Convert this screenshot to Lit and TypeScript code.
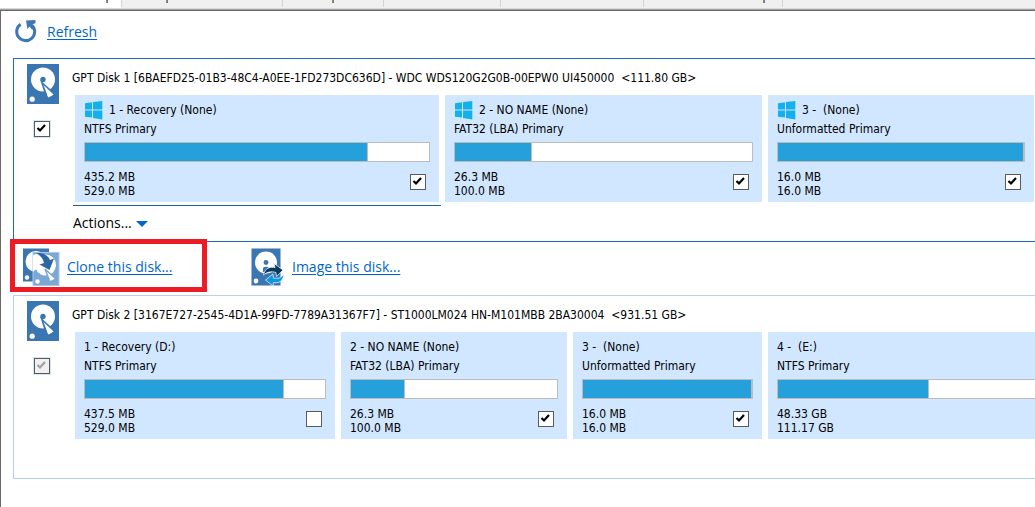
import { LitElement, html, svg, css, nothing } from "lit";
import { customElement, property, state } from "lit/decorators.js";
import { classMap } from "lit/directives/class-map.js";

interface Partition {
  name: string;
  kind: string;
  used: string;
  total: string;
  fill: number;
  weight: number;
  checked?: boolean;
  windows?: boolean;
  open?: boolean;
}

interface Disk {
  id: string;
  title: string;
  locked?: boolean;
  active?: boolean;
  partitions: Partition[];
}

const DISKS: Disk[] = [
  {
    id: "disk1",
    title: "GPT Disk 1 [6BAEFD25-01B3-48C4-A0EE-1FD273DC636D] - WDC WDS120G2G0B-00EPW0 UI450000  <111.80 GB>",
    active: true,
    partitions: [
      { name: "1 - Recovery (None)", kind: "NTFS Primary", used: "435.2 MB", total: "529.0 MB", fill: 82.3, weight: 364, checked: true, windows: true },
      { name: "2 - NO NAME (None)", kind: "FAT32 (LBA) Primary", used: "26.3 MB", total: "100.0 MB", fill: 26, weight: 317, checked: true, windows: true },
      { name: "3 -  (None)", kind: "Unformatted Primary", used: "16.0 MB", total: "16.0 MB", fill: 100, weight: 266, checked: true, windows: true },
    ],
  },
  {
    id: "disk2",
    title: "GPT Disk 2 [3167E727-2545-4D1A-99FD-7789A31367F7] - ST1000LM024 HN-M101MBB 2BA30004  <931.51 GB>",
    locked: true,
    partitions: [
      { name: "1 - Recovery (D:)", kind: "NTFS Primary", used: "437.5 MB", total: "529.0 MB", fill: 83, weight: 260, checked: false },
      { name: "2 - NO NAME (None)", kind: "FAT32 (LBA) Primary", used: "26.3 MB", total: "100.0 MB", fill: 26, weight: 226, checked: true },
      { name: "3 -  (None)", kind: "Unformatted Primary", used: "16.0 MB", total: "16.0 MB", fill: 100, weight: 189, checked: true },
      { name: "4 -  (E:)", kind: "NTFS Primary", used: "48.33 GB", total: "111.17 GB", fill: 58.8, weight: 267, open: true },
    ],
  },
];

const driveIcon = html`<svg width="32" height="40" viewBox="0 0 32 40" aria-hidden="true">
  <rect width="32" height="40" fill="#3a76b1" />
  <circle cx="16" cy="15.5" r="12" fill="#fff" />
  <circle cx="16" cy="15.5" r="2.7" fill="#3a76b1" />
  <path d="M15.5 19.5 L28 31 L20.5 35 Z" fill="#fff" stroke="#3a76b1" stroke-width="2.2" />
  <path d="M16.5 21 L26.5 30.5 L21.5 33.5 Z" fill="#fff" />
  <circle cx="5.2" cy="35.2" r="2.6" fill="#fff" />
</svg>`;

const windowsIcon = html`<svg width="19" height="19" viewBox="0 0 19 19" aria-hidden="true">
  <path fill="#14b0ec" d="M1 2.2 8 1.2V8.500H1zM9 1 18.300 0V8.500H9zM1 9.500h7v7L1 15.800zM9 9.500h9.300v9L9 17z" />
</svg>`;

const refreshIcon = html`<svg width="24" height="26" viewBox="0 0 24 26" aria-hidden="true">
  <path d="M6.600 5.200 A9 9 0 1 0 18 6.200" fill="none" stroke="#3d78b4" stroke-width="3" />
  <path d="M12 1.600 L21.400 1 L21.600 4 L18.500 5.500 L21 8.500 L21 10.500 L18 10.500 L15.500 7.500 L13.400 10 Z" fill="#3d78b4" />
</svg>`;

const cloneIcon = html`<svg width="38" height="38" viewBox="0 0 38 38" aria-hidden="true">
  <rect x="1" y="0.5" width="26" height="33" fill="#3a76b1" />
  <circle cx="14" cy="13.5" r="10.5" fill="#fff" />
  <circle cx="5" cy="29.5" r="2.2" fill="#fff" />
  <rect x="11" y="4.5" width="26" height="33" fill="#7ba7d4" stroke="#a9c6e4" stroke-width="1" />
  <circle cx="23.5" cy="17" r="10.5" fill="#fff" />
  <path d="M11 24V7L17 5L24 12Z" fill="#fff" />
  <path d="M14 5.5 C20 4 26 7 28 12 L32 10.5 L27.5 22 L17.5 16.5 L22 15 C21 10 18 7 14 5.5Z" fill="#2c67a3" />
  <path d="M23 21 L34 31 L28 34 Z" fill="#fff" stroke="#7ba7d4" stroke-width="1.5" />
  <circle cx="15.5" cy="33.5" r="2.2" fill="#fff" />
</svg>`;

const imageIcon = html`<svg width="34" height="38" viewBox="0 0 34 38" aria-hidden="true">
  <rect x="0.5" y="0.5" width="29" height="37" fill="#3a76b1" />
  <circle cx="15" cy="14.5" r="11" fill="#fff" />
  <circle cx="15" cy="14.5" r="2.4" fill="#3a76b1" />
  <path d="M12 20 a4 4 0 0 1 6 0 v4 h-6z" fill="#3a76b1" />
  <circle cx="5" cy="33" r="2.4" fill="#fff" />
  <path d="M12.5 27 C14 20 19 18.5 24 19.5 L23 15.5 L32 22 L25.5 28.5 L25 24.5 C20 23 16 24 12.5 27Z" fill="#0a3a5c" stroke="#fff" stroke-width="0.7" />
  <path d="M33 26 C32 34 27 35.5 22.5 34.5 L22 38 L14.5 32 L22 26 L22.5 30 C27 31 30 30 33 26Z" fill="#0c97e2" stroke="#fff" stroke-width="0.7" />
</svg>`;

const base = css`
  * {
    box-sizing: border-box;
  }
  svg {
    display: block;
    flex: none;
  }
  .check {
    appearance: none;
    flex: none;
    width: 16px;
    height: 16px;
    margin: 0;
    border: 1px solid #5a5a5a;
    background: #fff center / 14px 14px no-repeat;
  }
  .check:checked {
    background-image: url("data:image/svg+xml,%3Csvg xmlns='http://www.w3.org/2000/svg' viewBox='0 0 14 14'%3E%3Cpath d='M2.5 6 5 8.5 10 3' fill='none' stroke='%23000' stroke-width='2.2'/%3E%3C/svg%3E");
  }
  .check:disabled {
    background-color: #f0f0f0;
  }
  .check:disabled:checked {
    background-image: url("data:image/svg+xml,%3Csvg xmlns='http://www.w3.org/2000/svg' viewBox='0 0 14 14'%3E%3Cpath d='M2.5 6 5 8.5 10 3' fill='none' stroke='%23a0a0a0' stroke-width='2.2'/%3E%3C/svg%3E");
  }
`;

@customElement("disk-panel")
export class DiskPanel extends LitElement {
  @property({ attribute: false }) disk!: Disk;

  static styles = [
    base,
    css`
      :host {
        display: block;
        font: 12px/19px "DejaVu Sans Condensed", "Noto Sans", sans-serif;
        color: #000;
      }
      .panel {
        display: flex;
        gap: 13px;
        padding-left: 13px;
        border: 1px solid #b8d2ea;
        border-right: 0;
      }
      .active {
        border-color: #1f6cbb;
      }
      .rail {
        display: flex;
        flex-direction: column;
        gap: 17px;
        width: 32px;
        padding-top: 5px;
      }
      .rail .check {
        outline: 1px solid #d0e7f8;
        margin-left: 7px;
      }
      .body {
        flex: 1;
        min-width: 0;
      }
      .title {
        margin: 0;
        padding-top: 2px;
        font-size: 12px;
        font-weight: 400;
        line-height: 34px;
        white-space: pre;
      }
      .partitions {
        display: grid;
        column-gap: 6px;
        padding: 0 1px 0 3px;
      }
      .open-ended {
        padding-right: 0;
      }
      .partition {
        min-width: 0;
        padding: 6px 9px 4px;
        background: #d1e7ff;
      }
      .open {
        padding-right: 0;
      }
      .line {
        display: flex;
        align-items: center;
        gap: 6px;
        height: 19px;
        white-space: pre;
      }
      .usage {
        appearance: none;
        display: block;
        width: 100%;
        height: 20px;
        margin-top: 3px;
        border: 1px solid #bcbcbc;
        background: #fff;
      }
      .open .usage {
        border-right: 0;
      }
      .usage::-webkit-progress-bar {
        background: #fff;
      }
      .usage::-webkit-progress-value {
        background: #26a0da;
        border-right: 1px solid #bcbcbc;
      }
      .foot {
        display: flex;
        justify-content: space-between;
        margin-top: 8px;
        line-height: 14px;
      }
      .foot .check {
        margin: 4px 4px 0 0;
      }
      .rule {
        grid-column: 1;
        height: 1px;
        margin: 3px -2px 0;
        background: #1a5fa8;
      }
      .tail {
        min-height: 39px;
      }
      .selected .tail {
        min-height: 35px;
      }
      .actions {
        display: flex;
        align-items: center;
        gap: 4px;
        height: 34px;
        padding: 0 0 0 1px;
        border: 0;
        background: none;
        color: #000;
        font: 14px/20px "Open Sans", "Noto Sans", sans-serif;
      }
    `,
  ];

  private partition(p: Partition) {
    return html`<section class=${classMap({ partition: true, open: !!p.open })}>
      <div class="line">${p.windows ? windowsIcon : nothing}<span>${p.name}</span></div>
      <div class="line">${p.kind}</div>
      <progress class="usage" max="100" .value=${p.fill} aria-label="${p.name} usage"></progress>
      <div class="foot">
        <div>
          <div>${p.used}</div>
          <div>${p.total}</div>
        </div>
        ${p.open
          ? nothing
          : html`<input class="check" type="checkbox" .checked=${!!p.checked} aria-label=${p.name} />`}
      </div>
    </section>`;
  }

  render() {
    const d = this.disk;
    const columns = d.partitions.map((p) => `minmax(0, ${p.weight}fr)`).join(" ");
    const openEnded = d.partitions.some((p) => p.open);
    return html`<article class=${classMap({ panel: true, active: !!d.active })}>
      <div class="rail">
        ${driveIcon}
        <input class="check" type="checkbox" checked ?disabled=${!!d.locked} aria-label="Select ${d.title}" />
      </div>
      <div class=${classMap({ body: true, selected: !!d.active })}>
        <h2 class="title">${d.title}</h2>
        <div
          class=${classMap({ partitions: true, "open-ended": openEnded })}
          style="grid-template-columns: ${columns}"
        >
          ${d.partitions.map((p) => this.partition(p))}
          ${d.active ? html`<div class="rule"></div>` : nothing}
        </div>
        <div class="tail">
          ${d.active
            ? html`<button class="actions" type="button">
                Actions...
                <svg width="12" height="8" viewBox="0 0 12 8" aria-hidden="true">
                  <path d="M0 2h12L6 8z" fill="#0066cc" />
                </svg>
              </button>`
            : nothing}
        </div>
      </div>
    </article>`;
  }
}

@customElement("app-root")
export class AppRoot extends LitElement {
  @state() private disks = DISKS;

  static styles = [
    base,
    css`
      :host {
        display: flex;
        flex-direction: column;
        min-height: 100vh;
        overflow: hidden;
        background: #fff;
        font: 14px/20px "Open Sans", "Noto Sans", sans-serif;
      }
      .tabs {
        display: block;
        width: 100%;
        height: 10px;
      }
      .page {
        flex: 1;
        padding: 8px 0 0 12px;
        border-top: 1px solid #696969;
        border-left: 1px solid #696969;
      }
      .link {
        display: flex;
        align-items: center;
        gap: 7px;
        color: #0066cc;
        text-underline-offset: 2px;
      }
      .toolbar {
        display: flex;
        height: 39px;
        padding: 0 1px;
        align-items: flex-start;
      }
      .toolbar .link {
        gap: 9px;
      }
      .tools {
        display: grid;
        grid-template-columns: 229px auto;
        justify-content: start;
        align-items: center;
        height: 53px;
        padding: 0 0 3px 9px;
      }
      .marked {
        position: relative;
        justify-self: start;
      }
      .marked::after {
        content: "";
        position: absolute;
        inset: -9px -35px -6px -12px;
        border: 5px solid #ed1c24;
        pointer-events: none;
      }
    `,
  ];

  render() {
    return html`
      <svg class="tabs" height="10" aria-hidden="true">
        <rect width="100%" height="8" fill="#f0f0f0" />
        <rect width="121" height="8" fill="#fff" />
        <rect y="8" width="100%" height="1" fill="#d8d8d8" />
        <rect y="9" width="100%" height="1" fill="#a0a0a0" />
        ${[121, 282, 383, 500, 643, 782].map((x) => svg`<rect x=${x} width="1" height="7" fill="#d4d4d4" />`)}
        ${[106, 166, 332, 763].map(
          (x) => svg`<rect x=${x} width="1" height="3" fill="#c07a30" /><rect x=${x + 1} width="1" height="3" fill="#5d7fa8" />`
        )}
      </svg>
      <main class="page">
        <div class="toolbar">
          <a class="link" href="#refresh">${refreshIcon}Refresh</a>
        </div>
        <disk-panel .disk=${this.disks[0]}></disk-panel>
        <nav class="tools">
          <a class="link marked" href="#clone">${cloneIcon}Clone this disk...</a>
          <a class="link" href="#image">${imageIcon}Image this disk...</a>
        </nav>
        <disk-panel .disk=${this.disks[1]}></disk-panel>
      </main>
    `;
  }
}
